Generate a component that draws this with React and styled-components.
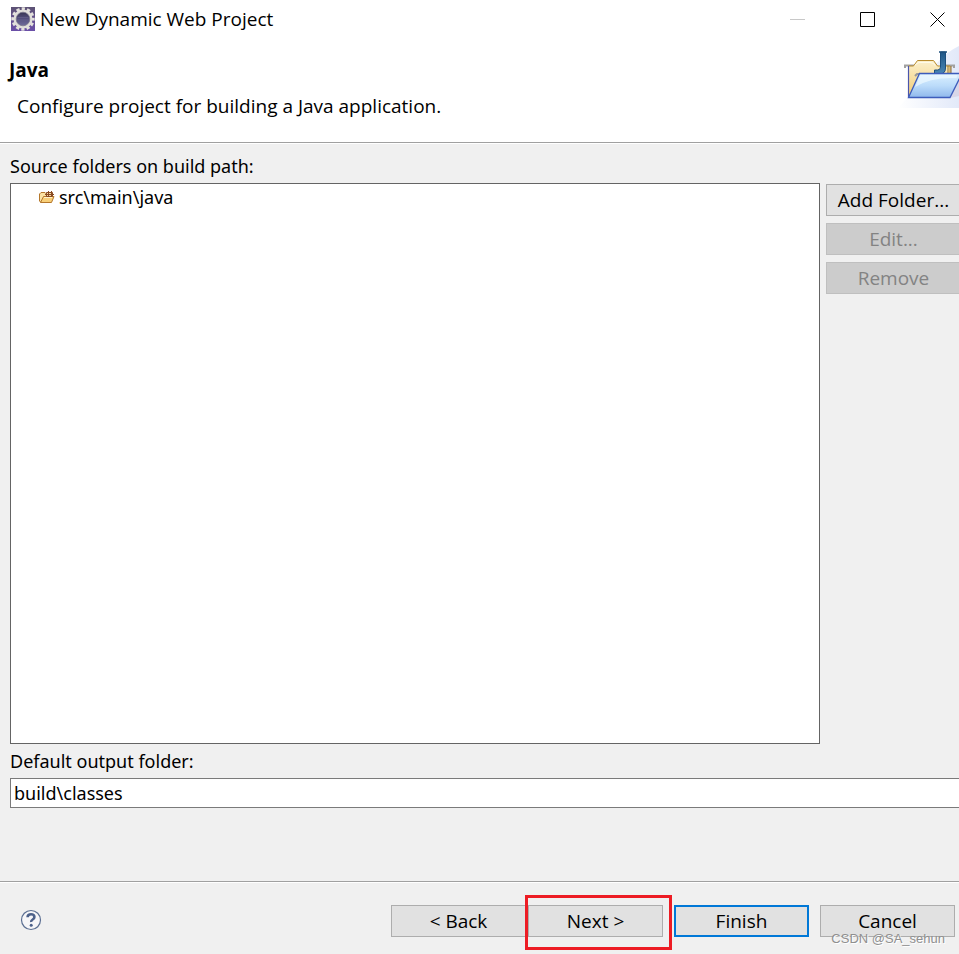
import React, { useState } from 'react';
import styled, { createGlobalStyle } from 'styled-components';

const theme = {
  fontDialog: "'Open Sans', 'Noto Sans', sans-serif",
  fontContent: "'Noto Sans', 'Open Sans', sans-serif",
  colorPanel: '#f0f0f0',
  colorButton: '#e1e1e1',
  colorButtonBorder: '#adadad',
  colorDisabled: '#cccccc',
  colorDisabledBorder: '#bfbfbf',
  colorDisabledText: '#838383',
  colorLine: '#a0a0a0',
  colorFocus: '#0078d7',
  colorMark: '#ed1c24',
};

const folders = ['src\\main\\java'];

const EclipseIcon = () => (
  <svg width="24" height="24" viewBox="0 0 24 24" aria-hidden="true">
    <defs>
      <linearGradient id="eclipseBg" x1="0" y1="0" x2="0" y2="1">
        <stop offset="0" stopColor="#5d5274" />
        <stop offset="1" stopColor="#6b4fa8" />
      </linearGradient>
      <linearGradient id="eclipseCore" x1="0" y1="0" x2="0" y2="1">
        <stop offset="0" stopColor="#33304a" />
        <stop offset="0.5" stopColor="#55507f" />
        <stop offset="1" stopColor="#75719f" />
      </linearGradient>
    </defs>
    <rect width="24" height="24" fill="url(#eclipseBg)" />
    <circle
      cx="12"
      cy="12"
      r="10"
      fill="none"
      stroke="#e4e2dd"
      strokeWidth="3.4"
      strokeDasharray="3.2 2.036"
      strokeDashoffset="1.6"
    />
    <circle cx="12" cy="12" r="8.2" fill="url(#eclipseCore)" stroke="#e0deda" strokeWidth="2.8" />
    <circle cx="12" cy="12" r="6.8" fill="none" stroke="#77748a" strokeWidth="0.8" />
    <path d="M6.500 10.500h11M6.200 13h11.600" stroke="#69658f" strokeWidth="0.6" />
  </svg>
);

const PackageIcon = () => (
  <svg width="16" height="14" viewBox="0 0 16 14" aria-hidden="true">
    <path d="M0.500 11V4l1.500-1.500h4L7.500 4H12v8H1.500z" fill="#fbe3a4" stroke="#b5772b" />
    <path d="M1.500 12.500l3-6h10.500l-2.500 6z" fill="#f8cf78" stroke="#b5772b" />
    <path d="M5 7.500h8" stroke="#fff0c8" />
    <path d="M7.500 2.500h6v4h-6z" fill="#f6d9a5" stroke="#8a4b22" />
    <path d="M6 4.500h9M9.500 1v5M12.500 1v5" stroke="#8a4b22" />
  </svg>
);

const BannerIcon = () => (
  <svg width="69" height="64" viewBox="0 0 69 64" aria-hidden="true">
    <defs>
      <linearGradient id="bannerGlow" x1="0" y1="0" x2="1" y2="0">
        <stop offset="0" stopColor="#ffffff" />
        <stop offset="1" stopColor="#e2e9f9" />
      </linearGradient>
      <linearGradient id="folderBack" x1="0" y1="0" x2="0" y2="1">
        <stop offset="0" stopColor="#fbf0cc" />
        <stop offset="1" stopColor="#f2cc75" />
      </linearGradient>
      <linearGradient id="folderFront" x1="0" y1="0" x2="0" y2="1">
        <stop offset="0" stopColor="#dcf1ff" />
        <stop offset="0.5" stopColor="#bcdcfa" />
        <stop offset="1" stopColor="#8fb8ec" />
      </linearGradient>
      <linearGradient id="letterBlue" x1="0" y1="0" x2="0" y2="1">
        <stop offset="0" stopColor="#1f5686" />
        <stop offset="1" stopColor="#4a86b4" />
      </linearGradient>
    </defs>
    <path d="M8 64L46 20Q56 8 69 2v62z" fill="url(#bannerGlow)" />
    <path d="M15 24v-2.500h10M53 21.500h11V24" fill="none" stroke="#a1a1a1" strokeWidth="2" />
    <path d="M18.500 53V22h5l4-5.500h16l4 5.500H60v31z" fill="url(#folderBack)" stroke="#b98c2d" />
    <path d="M18.500 53V22" stroke="#4a55ad" strokeWidth="1.200" />
    <path d="M25 21.500q1-3 5-3h10q4 0 5 3" fill="none" stroke="#fffbe9" />
    <path d="M58 22v7M61 22v7" stroke="#8f6c2c" />
    <path d="M50.500 8h5v16q0 6-6 6h-5v-4h3q3 0 3-3z" fill="url(#letterBlue)" stroke="#1d4f7d" />
    <path d="M49 8h8" stroke="#1d4f7d" strokeWidth="1.500" />
    <path d="M25 32l2-2h4" fill="none" stroke="#9a9a9a" strokeWidth="2" />
    <path d="M60 54l9-17v15z" fill="#cdc3d8" opacity="0.5" />
    <path d="M18.500 53.500l11-24H72l-12 24z" fill="url(#folderFront)" stroke="#3d5cbb" strokeWidth="1.300" />
    <path d="M25 43l5.500-12h37l-1 3q-26-1-41.500 9z" fill="#eefaff" opacity="0.7" />
  </svg>
);

const HelpIcon = () => (
  <svg width="22" height="22" viewBox="0 0 22 22" aria-hidden="true">
    <circle cx="11" cy="11" r="9.500" fill="#f6f6f8" stroke="#5b6f92" strokeWidth="1.200" />
    <path
      d="M7.600 8.300q0-3 3.400-3t3.400 2.700q0 1.500-1.700 2.500t-1.500 2.500"
      fill="none"
      stroke="#4c618a"
      strokeWidth="2.600"
    />
    <circle cx="11.200" cy="16.200" r="1.500" fill="#4c618a" />
  </svg>
);

const App = () => {
  const [output, setOutput] = useState('build\\classes');

  return (
    <>
      <GlobalStyle />
      <Dialog>
        <TitleBar>
          <EclipseIcon />
          <Title>New Dynamic Web Project</Title>
          <WindowButton type="button" aria-label="Minimize" disabled>
            <svg width="16" height="16" viewBox="0 0 16 16">
              <path d="M0 7.500h15" stroke="#c8c8c8" />
            </svg>
          </WindowButton>
          <WindowButton type="button" aria-label="Maximize">
            <svg width="16" height="16" viewBox="0 0 16 16">
              <path d="M0.500 0.500h14v14h-14z" fill="none" stroke="#000" />
            </svg>
          </WindowButton>
          <WindowButton type="button" aria-label="Close">
            <svg width="16" height="16" viewBox="0 0 16 16">
              <path d="M0.500 0.500l14 14M14.500 0.500l-14 14" stroke="#000" />
            </svg>
          </WindowButton>
        </TitleBar>

        <Banner>
          <div>
            <BannerTitle>Java</BannerTitle>
            <BannerText>Configure project for building a Java application.</BannerText>
          </div>
          <BannerIcon />
        </Banner>

        <Content>
          <Label as="h2">Source folders on build path:</Label>
          <Columns>
            <FolderList aria-label="Source folders">
              {folders.map(folder => (
                <Folder key={folder}>
                  <PackageIcon />
                  {folder}
                </Folder>
              ))}
            </FolderList>
            <Actions>
              <Button type="button">Add Folder...</Button>
              <Button type="button" disabled>Edit...</Button>
              <Button type="button" disabled>Remove</Button>
            </Actions>
          </Columns>
          <Label htmlFor="output">Default output folder:</Label>
          <Input
            id="output"
            type="text"
            value={output}
            onChange={e => setOutput(e.target.value)}
          />
        </Content>

        <Footer>
          <HelpButton type="button" aria-label="Help">
            <HelpIcon />
          </HelpButton>
          <Steps>
            <Button type="button">&lt; Back</Button>
            <Marked>
              <Button type="button">Next &gt;</Button>
            </Marked>
          </Steps>
          <Button type="button" $primary>Finish</Button>
          <Button type="button">Cancel</Button>
          <Watermark>CSDN @SA_sehun</Watermark>
        </Footer>
      </Dialog>
    </>
  );
};

const GlobalStyle = createGlobalStyle`
  * {
    box-sizing: border-box;
  }

  body {
    margin: 0;
    background-color: ${theme.colorPanel};
  }

  body, button {
    font-family: ${theme.fontDialog};
    font-size: 19px;
    line-height: 24px;
    color: black;
  }
`;

const Dialog = styled.div`
  display: flex;
  flex-direction: column;
  min-height: 100vh;
  overflow: hidden;
`;

const TitleBar = styled.header`
  display: flex;
  align-items: center;
  height: 38px;
  padding-left: 11px;
  background-color: white;
`;

const Title = styled.span`
  flex: 1;
  margin-left: 5px;
`;

const WindowButton = styled.button`
  display: flex;
  align-items: center;
  justify-content: center;
  width: 70px;
  height: 38px;
  padding: 2px 0 0;
  border: 0;
  background: none;

  &:last-child {
    width: 42px;
    margin-left: 14px;
  }
`;

const Banner = styled.section`
  display: flex;
  justify-content: space-between;
  height: 105px;
  padding: 6px 0 0 9px;
  background-color: white;
  border-bottom: 1px solid ${theme.colorLine};
`;

const BannerTitle = styled.h1`
  margin: 14px 0 12px;
  font-size: 19px;
  line-height: 24px;
`;

const BannerText = styled.p`
  margin: 0;
  padding-left: 8px;
`;

const Content = styled.main`
  flex: 1;
  display: flex;
  flex-direction: column;
  margin-right: -2px;
  padding: 10px 0 73px 10px;
  border-top: 1px solid white;
`;

const Label = styled.label`
  margin: 0 0 5px;
  font-family: ${theme.fontContent};
  font-size: 18px;
  font-weight: normal;
  line-height: 24px;
`;

const Columns = styled.div`
  flex: 1;
  display: grid;
  grid-template-columns: 1fr 135px;
  gap: 6px;
  margin-bottom: 5px;
`;

const FolderList = styled.ul`
  margin: 0;
  padding: 1px 0;
  list-style: none;
  font-family: ${theme.fontContent};
  font-size: 18px;
  background-color: white;
  border: 1px solid #646464;
`;

const Folder = styled.li`
  display: flex;
  align-items: center;
  gap: 4px;
  padding-left: 28px;
`;

const Actions = styled.div`
  display: flex;
  flex-direction: column;
  gap: 7px;
  padding-top: 1px;
`;

const Button = styled.button`
  width: 135px;
  height: 32px;
  padding: 0;
  background-color: ${theme.colorButton};
  border: ${props =>
    props.$primary
      ? `2px solid ${theme.colorFocus}`
      : `1px solid ${theme.colorButtonBorder}`};

  &:disabled {
    color: ${theme.colorDisabledText};
    background-color: ${theme.colorDisabled};
    border-color: ${theme.colorDisabledBorder};
  }
`;

const Input = styled.input`
  height: 30px;
  padding: 0 3px;
  font-family: ${theme.fontContent};
  font-size: 18px;
  line-height: 24px;
  color: black;
  background-color: white;
  border: 1px solid #7a7a7a;
  border-radius: 0;
`;

const Footer = styled.footer`
  position: relative;
  display: flex;
  align-items: flex-start;
  gap: 11px;
  height: 73px;
  padding: 23px 4px 0 20px;
  border-top: 1px solid ${theme.colorLine};
  box-shadow: inset 0 1px white;
`;

const HelpButton = styled.button`
  display: flex;
  align-items: center;
  width: 22px;
  height: 30px;
  margin-right: auto;
  padding: 0;
  border: 0;
  background: none;
`;

const Steps = styled.div`
  display: flex;
  gap: 2px;
`;

/* red highlight lies over the Next button and its neighbour */
const Marked = styled.div`
  position: relative;

  &::after {
    content: '';
    position: absolute;
    inset: -10px -9px -13px -3px;
    border: 3px solid ${theme.colorMark};
    pointer-events: none;
  }
`;

const Watermark = styled.span`
  position: absolute;
  right: 14px;
  bottom: 5px;
  font-family: 'Liberation Sans', sans-serif;
  font-size: 13px;
  line-height: 20px;
  color: #8f8f8f;
  text-shadow: 1px 1px white;
  pointer-events: none;
`;

export default App;
